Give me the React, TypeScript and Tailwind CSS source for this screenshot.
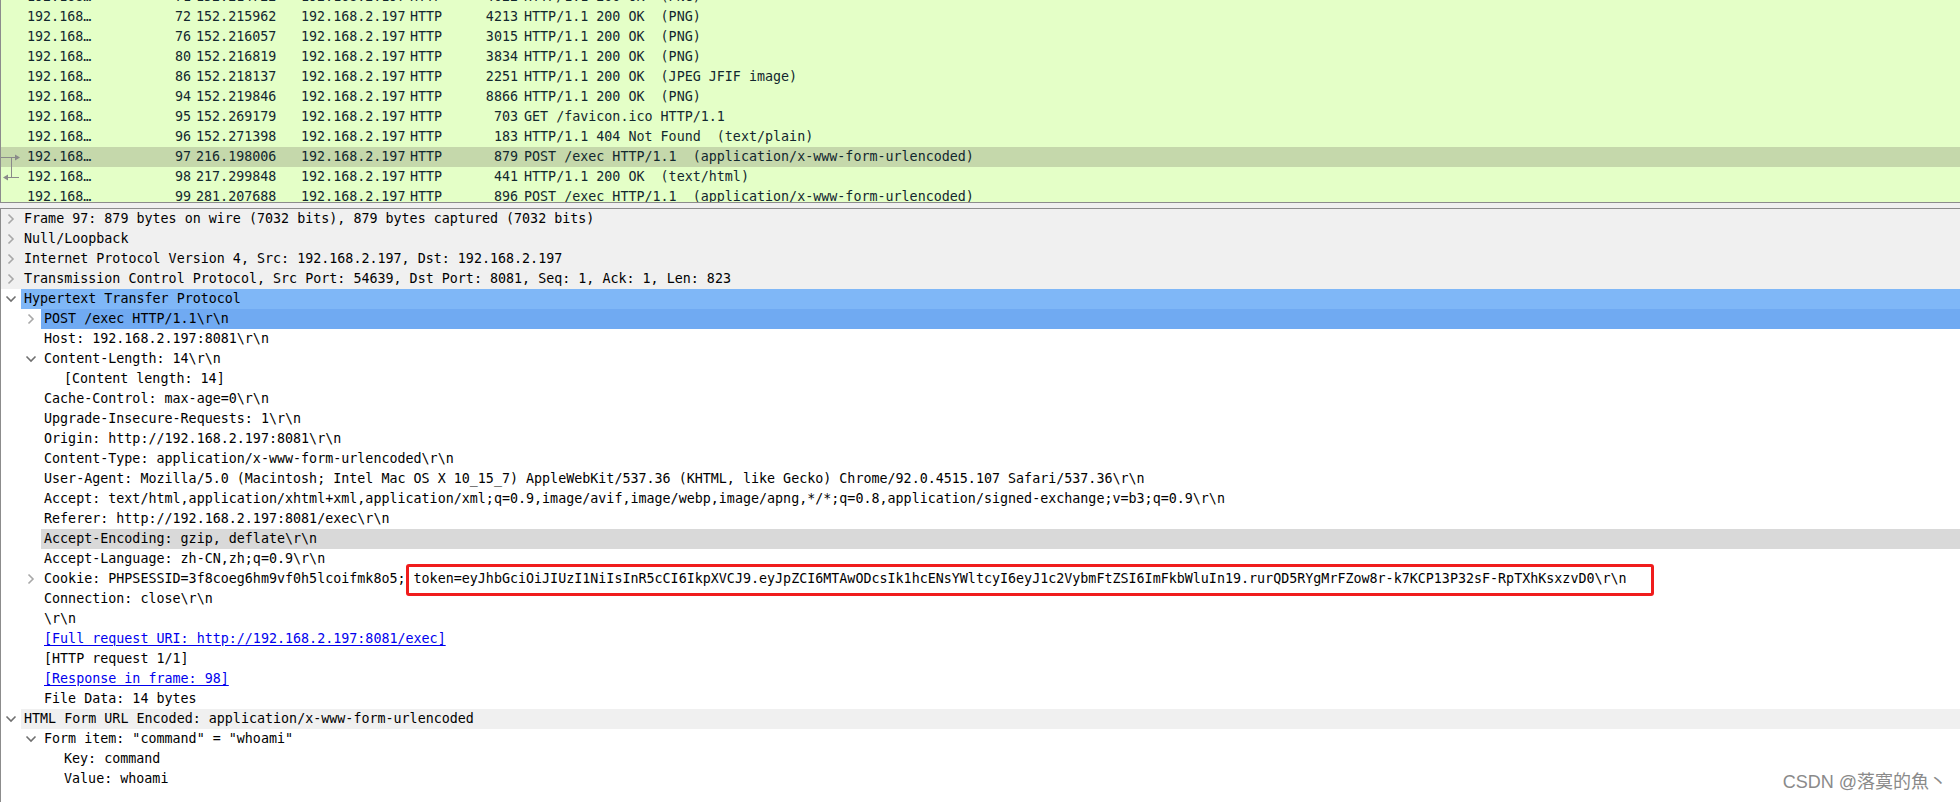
import React from "react";

const MONO = "font-['DejaVu_Sans_Mono',monospace] text-[13.35px]";

type PRow = {
  src: string;
  no: string;
  time: string;
  dst: string;
  proto: string;
  len: string;
  info: string;
  sel?: boolean;
  arrow?: "req" | "resp";
};

const packets: PRow[] = [
  { src: "192.168…", no: "71", time: "152.214722", dst: "192.168.2.197", proto: "HTTP", len: "4022", info: "HTTP/1.1 200 OK  (PNG)" },
  { src: "192.168…", no: "72", time: "152.215962", dst: "192.168.2.197", proto: "HTTP", len: "4213", info: "HTTP/1.1 200 OK  (PNG)" },
  { src: "192.168…", no: "76", time: "152.216057", dst: "192.168.2.197", proto: "HTTP", len: "3015", info: "HTTP/1.1 200 OK  (PNG)" },
  { src: "192.168…", no: "80", time: "152.216819", dst: "192.168.2.197", proto: "HTTP", len: "3834", info: "HTTP/1.1 200 OK  (PNG)" },
  { src: "192.168…", no: "86", time: "152.218137", dst: "192.168.2.197", proto: "HTTP", len: "2251", info: "HTTP/1.1 200 OK  (JPEG JFIF image)" },
  { src: "192.168…", no: "94", time: "152.219846", dst: "192.168.2.197", proto: "HTTP", len: "8866", info: "HTTP/1.1 200 OK  (PNG)" },
  { src: "192.168…", no: "95", time: "152.269179", dst: "192.168.2.197", proto: "HTTP", len: "703", info: "GET /favicon.ico HTTP/1.1" },
  { src: "192.168…", no: "96", time: "152.271398", dst: "192.168.2.197", proto: "HTTP", len: "183", info: "HTTP/1.1 404 Not Found  (text/plain)" },
  { src: "192.168…", no: "97", time: "216.198006", dst: "192.168.2.197", proto: "HTTP", len: "879", info: "POST /exec HTTP/1.1  (application/x-www-form-urlencoded)", sel: true, arrow: "req" },
  { src: "192.168…", no: "98", time: "217.299848", dst: "192.168.2.197", proto: "HTTP", len: "441", info: "HTTP/1.1 200 OK  (text/html)", arrow: "resp" },
  { src: "192.168…", no: "99", time: "281.207688", dst: "192.168.2.197", proto: "HTTP", len: "896", info: "POST /exec HTTP/1.1  (application/x-www-form-urlencoded)" },
];

function Arrow({ kind }: { kind?: "req" | "resp" }) {
  if (!kind) return null;
  return (
    <svg width="26" height="20" viewBox="0 0 26 20" className="block">
      {kind === "req" ? (
        <g stroke="#8a8a8a" strokeWidth="1" fill="#8a8a8a">
          <line x1="0" y1="10.5" x2="16" y2="10.5" />
          <line x1="10.5" y1="10.5" x2="10.5" y2="20" />
          <polygon points="14,7.5 19,10.5 14,13.5" stroke="none" />
        </g>
      ) : (
        <g stroke="#8a8a8a" strokeWidth="1" fill="#8a8a8a">
          <line x1="10.5" y1="0" x2="10.5" y2="10.5" />
          <line x1="5" y1="10.5" x2="18" y2="10.5" />
          <polygon points="7,7.5 2,10.5 7,13.5" stroke="none" />
        </g>
      )}
    </svg>
  );
}

function PacketRow({ p }: { p: PRow }) {
  return (
    <div className={`flex h-[20px] shrink-0 items-center whitespace-pre ${p.sel ? "bg-[#c5d8ab]" : ""}`}>
      <div className="w-[26px] shrink-0 h-[20px]">
        <Arrow kind={p.arrow} />
      </div>
      <span className="w-[132px] shrink-0">{p.src}</span>
      <span className="w-[32px] shrink-0 text-right">{p.no}</span>
      <span className="w-[110px] shrink-0 pl-[5px]">{p.time}</span>
      <span className="w-[109px] shrink-0">{p.dst}</span>
      <span className="w-[48px] shrink-0">{p.proto}</span>
      <span className="w-[60px] shrink-0 text-right">{p.len}</span>
      <span className="pl-[6px]">{p.info}</span>
    </div>
  );
}

function Chevron({ open }: { open?: boolean }) {
  if (open) {
    return (
      <svg width="12" height="8" viewBox="0 0 12 8" className="block">
        <polyline points="1.5,1.5 6,6 10.5,1.5" fill="none" stroke="#707070" strokeWidth="1.6" />
      </svg>
    );
  }
  return (
    <svg width="8" height="12" viewBox="0 0 8 12" className="block">
      <polyline points="1.5,1.5 6,6 1.5,10.5" fill="none" stroke="#a8a8a8" strokeWidth="1.6" />
    </svg>
  );
}

type DRowT = {
  level: 0 | 1 | 2;
  chev?: "open" | "closed";
  text: React.ReactNode;
  rowBg?: string;
  hl?: string;
  link?: boolean;
  box?: boolean;
};

const indent = ["w-0", "w-[20px]", "w-[40px]"];

const TOKEN =
  "token=eyJhbGciOiJIUzI1NiIsInR5cCI6IkpXVCJ9.eyJpZCI6MTAwODcsIk1hcENsYWltcyI6eyJ1c2VybmFtZSI6ImFkbWluIn19.rurQD5RYgMrFZow8r-k7KCP13P32sF-RpTXhKsxzvD0\\r\\n";

const details: DRowT[] = [
  { level: 0, chev: "closed", text: "Frame 97: 879 bytes on wire (7032 bits), 879 bytes captured (7032 bits)", rowBg: "bg-[#f0f0f0]" },
  { level: 0, chev: "closed", text: "Null/Loopback", rowBg: "bg-[#f0f0f0]" },
  { level: 0, chev: "closed", text: "Internet Protocol Version 4, Src: 192.168.2.197, Dst: 192.168.2.197", rowBg: "bg-[#f0f0f0]" },
  { level: 0, chev: "closed", text: "Transmission Control Protocol, Src Port: 54639, Dst Port: 8081, Seq: 1, Ack: 1, Len: 823", rowBg: "bg-[#f0f0f0]" },
  { level: 0, chev: "open", text: "Hypertext Transfer Protocol", hl: "bg-[#7fb7f7]" },
  { level: 1, chev: "closed", text: "POST /exec HTTP/1.1\\r\\n", hl: "bg-[#70aaf2]" },
  { level: 1, text: "Host: 192.168.2.197:8081\\r\\n" },
  { level: 1, chev: "open", text: "Content-Length: 14\\r\\n" },
  { level: 2, text: "[Content length: 14]" },
  { level: 1, text: "Cache-Control: max-age=0\\r\\n" },
  { level: 1, text: "Upgrade-Insecure-Requests: 1\\r\\n" },
  { level: 1, text: "Origin: http://192.168.2.197:8081\\r\\n" },
  { level: 1, text: "Content-Type: application/x-www-form-urlencoded\\r\\n" },
  { level: 1, text: "User-Agent: Mozilla/5.0 (Macintosh; Intel Mac OS X 10_15_7) AppleWebKit/537.36 (KHTML, like Gecko) Chrome/92.0.4515.107 Safari/537.36\\r\\n" },
  { level: 1, text: "Accept: text/html,application/xhtml+xml,application/xml;q=0.9,image/avif,image/webp,image/apng,*/*;q=0.8,application/signed-exchange;v=b3;q=0.9\\r\\n" },
  { level: 1, text: "Referer: http://192.168.2.197:8081/exec\\r\\n" },
  { level: 1, text: "Accept-Encoding: gzip, deflate\\r\\n", hl: "bg-[#d9d9d9]" },
  { level: 1, text: "Accept-Language: zh-CN,zh;q=0.9\\r\\n" },
  { level: 1, chev: "closed", text: "Cookie: PHPSESSID=3f8coeg6hm9vf0h5lcoifmk8o5; " + TOKEN, box: true },
  { level: 1, text: "Connection: close\\r\\n" },
  { level: 1, text: "\\r\\n" },
  { level: 1, text: "[Full request URI: http://192.168.2.197:8081/exec]", link: true },
  { level: 1, text: "[HTTP request 1/1]" },
  { level: 1, text: "[Response in frame: 98]", link: true },
  { level: 1, text: "File Data: 14 bytes" },
  { level: 0, chev: "open", text: "HTML Form URL Encoded: application/x-www-form-urlencoded", hl: "bg-[#f0f0f0]" },
  { level: 1, chev: "open", text: 'Form item: "command" = "whoami"' },
  { level: 2, text: "Key: command" },
  { level: 2, text: "Value: whoami" },
];

function DetailRow({ r }: { r: DRowT }) {
  return (
    <div className={`relative flex h-[20px] shrink-0 items-stretch whitespace-pre ${r.rowBg ?? ""}`}>
      <div className={`${indent[r.level]} shrink-0`} />
      <div className="w-[20px] shrink-0 flex items-center justify-center">
        {r.chev ? <Chevron open={r.chev === "open"} /> : null}
      </div>
      <div className={`flex-1 flex items-center pl-[3px] ${r.hl ?? ""}`}>
        {r.link ? (
          <span className="text-[#0000ee] underline underline-offset-2">{r.text}</span>
        ) : (
          <span>{r.text}</span>
        )}
      </div>
      {r.box ? (
        <div className="absolute left-[405px] top-[-5px] h-[32px] w-[1248px] rounded-[3px] border-[3px] border-[#f01c1c]" />
      ) : null}
    </div>
  );
}

export default function App() {
  return (
    <div className={`relative flex h-[802px] w-[1960px] flex-col overflow-hidden bg-white text-black ${MONO}`}>
      {/* Packet list */}
      <div className="h-[203px] shrink-0 overflow-hidden border-b border-l border-[#8c8c8c] bg-[#e4ffc7] text-[#12272e]">
        <div className="mt-[-13px] flex flex-col">
          {packets.map((p, i) => (
            <PacketRow key={i} p={p} />
          ))}
        </div>
      </div>
      {/* splitter */}
      <div className="h-[5px] shrink-0 bg-[#f0f0f0]" />
      {/* Packet details */}
      <div className="flex flex-1 flex-col overflow-hidden border-t border-l border-[#8c8c8c] bg-white">
        {details.map((r, i) => (
          <DetailRow key={i} r={r} />
        ))}
      </div>
      <div className="absolute bottom-[8px] right-[13px] font-['Liberation_Sans','Noto_Sans_CJK_SC',sans-serif] text-[18px] leading-[24px] text-[#8a8a8a]">
        CSDN @落寞的魚丶
      </div>
    </div>
  );
}
